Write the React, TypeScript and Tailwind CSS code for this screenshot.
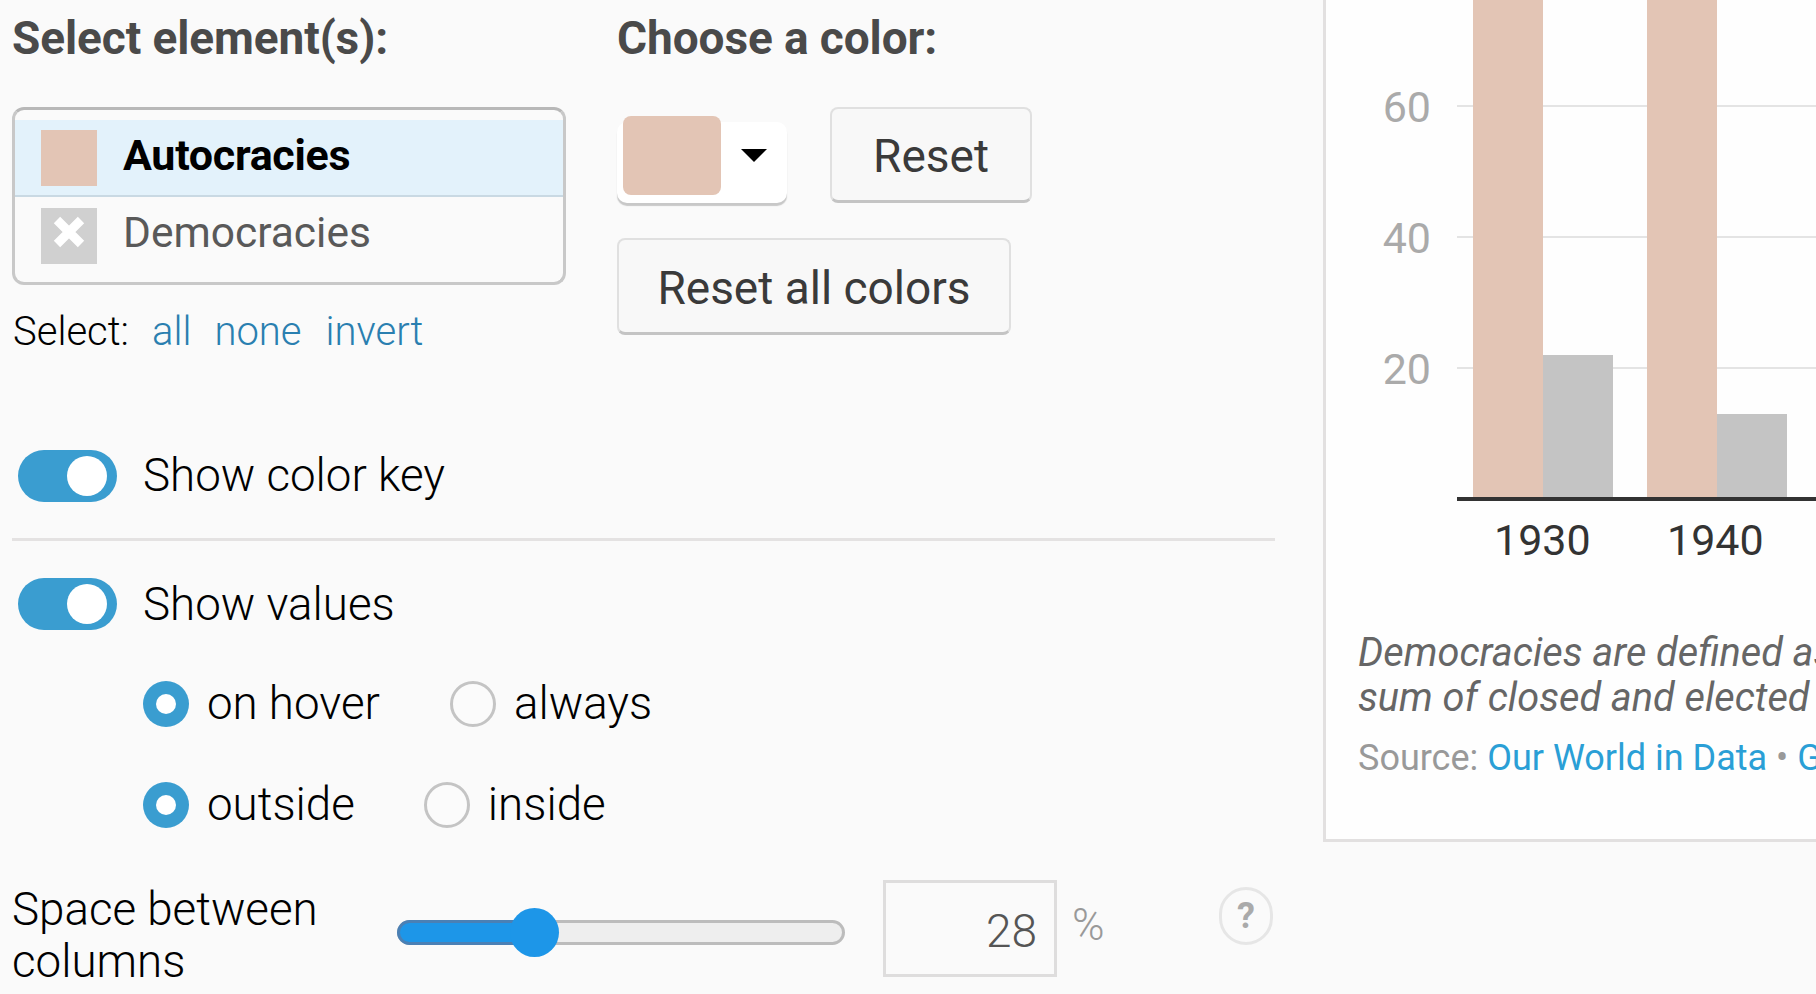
function Toggle() {
  return (
    <div className="flex h-[52px] w-[99px] items-center justify-end rounded-full bg-[#3a9dd0] pr-[10px]">
      <div className="h-[40px] w-[40px] rounded-full bg-white" />
    </div>
  );
}

function Radio({ on }: { on?: boolean }) {
  if (on) {
    return (
      <div className="flex h-[46px] w-[46px] items-center justify-center rounded-full bg-[#3a9dd0]">
        <div className="h-[20px] w-[20px] rounded-full bg-white" />
      </div>
    );
  }
  return <div className="h-[46px] w-[46px] rounded-full border-[3px] border-[#c4c4c4] bg-[#fbfbfb]" />;
}

function Option({ on, label, className }: { on?: boolean; label: string; className?: string }) {
  return (
    <div className={`flex items-center gap-[18px] ${className ?? ''}`}>
      <Radio on={on} />
      <span className="text-[45.7px] leading-[46px] font-light text-black">{label}</span>
    </div>
  );
}

function Group({ left, right }: { left: number; right: number }) {
  return (
    <div className="flex w-[174px] shrink-0 items-end">
      <div className="w-[70px] bg-[#e3c5b5]" style={{ height: left }} />
      <div className="w-[70px] bg-[#c4c4c4]" style={{ height: right }} />
    </div>
  );
}

function Gridline({ label, className }: { label: string; className: string }) {
  return (
    <div className={`absolute right-0 left-0 flex items-center ${className}`}>
      <span className="mt-[2px] w-[105px] text-right text-[43px] leading-[40px] text-[#aaaaaa]">{label}</span>
      <div className="ml-[26px] h-[2px] flex-1 bg-[#e4e4e4]" />
    </div>
  );
}

export default function App() {
  return (
    <div className="flex h-[994px] w-[1816px] overflow-hidden bg-[#fafafa] font-['Roboto',sans-serif]">
      <div className="w-[1275px] shrink-0 pl-[12px]">
        <div className="flex">
          <div className="w-[605px] shrink-0">
            <h2 className="pt-[13px] text-[46px] leading-[50px] font-bold tracking-[-0.1px] text-[#4a4a4a]">Select element(s):</h2>
            <div className="mt-[44px] h-[178px] w-[554px] rounded-[12px] border-[3px] border-[#c8c8c8] border-t-[#b8b8b8] pt-[10px]">
              <div className="flex h-[77px] items-center border-b-[2px] border-[#c9d9e3] bg-[#e3f2fb] pl-[26px]">
                <div className="h-[56px] w-[56px] bg-[#e3c5b5]" />
                <span className="mb-[6px] ml-[26px] text-[43px] leading-[50px] font-bold tracking-[-0.3px] text-black">Autocracies</span>
              </div>
              <div className="mt-[11px] flex h-[56px] items-center pl-[26px]">
                <div className="flex h-[56px] w-[56px] items-center justify-center bg-[#d0d0d0]">
                  <svg className="mb-[8px]" width="34" height="34" viewBox="0 0 34 34">
                    <path d="M5 5 L29 29 M29 5 L5 29" stroke="#ffffff" strokeWidth="9" />
                  </svg>
                </div>
                <span className="mb-[6px] ml-[26px] text-[42.5px] leading-[50px] text-[#595959]">Democracies</span>
              </div>
            </div>
            <div className="mt-[24px] flex text-[40px] leading-[46px] font-light">
              <span className="pl-px text-black">Select:</span>
              <a className="ml-[23px] text-[#2a7fb0]">all</a>
              <a className="ml-[23px] text-[#2a7fb0]">none</a>
              <a className="ml-[24px] text-[#2a7fb0]">invert</a>
            </div>
          </div>
          <div className="flex-1">
            <h2 className="pt-[13px] text-[46px] leading-[50px] font-bold tracking-[-0.1px] text-[#4a4a4a]">Choose a color:</h2>
            <div className="mt-[44px] flex items-start">
              <div className="mt-[15px] flex h-[81px] w-[170px] items-start rounded-[10px] bg-white pl-[6px] shadow-[0_3px_1px_#c8c8c8]">
                <div className="-mt-[6px] h-[79px] w-[98px] rounded-[8px] bg-[#e3c5b5]" />
                <div className="mt-[27px] ml-[20px] h-0 w-0 border-x-[13px] border-t-[13px] border-x-transparent border-t-black" />
              </div>
              <button className="ml-[43px] h-[96px] w-[202px] rounded-[8px] border-[2px] border-[#e0e0e0] border-b-[3px] border-b-[#c4c4c4] bg-[#f8f8f8] pt-[4px] text-[46px] font-normal text-[#3a3a3a]">
                Reset
              </button>
            </div>
            <button className="mt-[35px] h-[97px] w-[394px] rounded-[8px] border-[2px] border-[#e0e0e0] border-b-[3px] border-b-[#c4c4c4] bg-[#f8f8f8] pt-[4px] text-[46px] text-[#3a3a3a]">
              Reset all colors
            </button>
          </div>
        </div>

        <div className="mt-[95px] flex items-center pl-[6px]">
          <Toggle />
          <span className="ml-[26px] text-[45.7px] leading-[52px] font-light text-black">Show color key</span>
        </div>
        <div className="mt-[36px] h-[3px] bg-[#e4e2e2]" />
        <div className="mt-[36px] flex items-center pl-[6px]">
          <Toggle />
          <span className="mt-[2px] ml-[26px] text-[45.7px] leading-[52px] font-light text-black">Show values</span>
        </div>
        <div className="mt-[50px] flex pl-[131px]">
          <Option on label="on hover" />
          <Option label="always" className="ml-[70px]" />
        </div>
        <div className="mt-[55px] flex pl-[131px]">
          <Option on label="outside" />
          <Option label="inside" className="ml-[69px]" />
        </div>

        <div className="mt-[52px] flex items-start">
          <div className="mt-[4px] w-[385px] shrink-0 text-[45.7px] leading-[52px] font-light text-black">
            Space between
            <br />
            columns
          </div>
          <div className="relative mt-[40px] flex h-[25px] w-[448px] rounded-full border-[3px] border-[#bcbcbc] bg-[#eeeeee]">
            <div className="-my-[3px] -ml-[3px] h-[25px] w-[130px] rounded-l-full border-[3px] border-[#4a80b5] bg-[#1d96e8]" />
            <div className="absolute top-[-15px] left-[110px] h-[49px] w-[49px] rounded-full bg-[#1d96e8]" />
          </div>
          <div className="ml-[38px] flex h-[97px] w-[174px] shrink-0 items-center justify-end border-[3px] border-[#dedddd] pt-[5px] pr-[17px] text-[46px] font-light text-[#555555]">
            28
          </div>
          <span className="ml-[15px] pt-[20px] text-[44px] leading-[50px] font-light text-[#999999]">%</span>
          <div className="mt-[7px] mr-[2px] ml-auto flex h-[58px] w-[54px] items-center justify-center rounded-full border-[3px] border-[#e6e6e6] text-[36px] font-bold text-[#aaaaaa]">
            ?
          </div>
        </div>
      </div>

      <div className="ml-[48px] h-[842px] flex-1 border-b-[3px] border-l-[3px] border-[#e2e0e0] bg-[#fefefe]">
        <div className="relative h-[501px] border-b-[4px] border-transparent">
          <Gridline label="60" className="top-[85px]" />
          <Gridline label="40" className="top-[216px]" />
          <Gridline label="20" className="top-[347px]" />
          <div className="absolute right-0 bottom-[-4px] left-[131px] h-[4px] bg-[#333333]" />
          <div className="absolute bottom-0 left-[147px] flex">
            <Group left={497} right={142} />
            <Group left={497} right={83} />
          </div>
        </div>
        <div className="mt-[21px] flex pl-[168px] text-[43px] leading-[36px] text-[#333333]">
          <span className="w-[173px]">1930</span>
          <span>1940</span>
        </div>
        <div className="mt-[72px] pl-[32px] text-[39.7px] leading-[45px] whitespace-nowrap text-[#666666] italic">
          Democracies are defined as
          <br />
          sum of closed and elected
        </div>
        <div className="mt-[16px] pl-[32px] text-[36px] leading-[44px] whitespace-nowrap text-[#999999]">
          Source: <span className="text-[#2a9fd6]">Our World in Data</span> • <span className="text-[#2a9fd6]">Gapminder</span>
        </div>
      </div>
    </div>
  );
}
